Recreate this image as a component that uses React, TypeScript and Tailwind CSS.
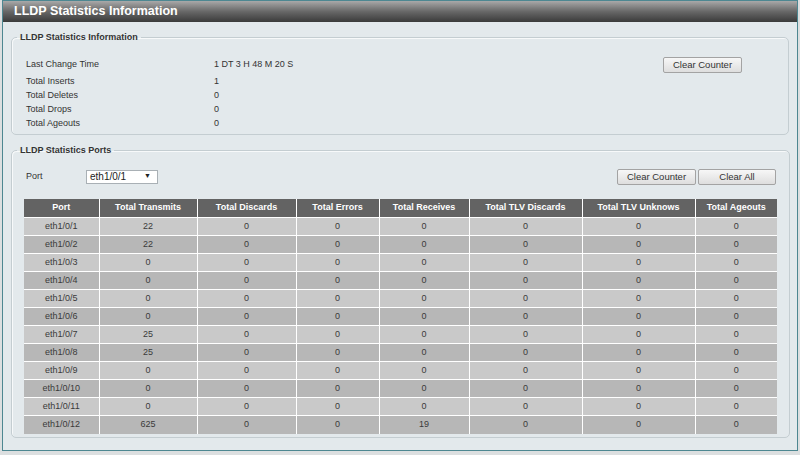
import React from "react"

const rows: [string, number, number, number, number, number, number, number][] = [
  ["eth1/0/1", 22, 0, 0, 0, 0, 0, 0],
  ["eth1/0/2", 22, 0, 0, 0, 0, 0, 0],
  ["eth1/0/3", 0, 0, 0, 0, 0, 0, 0],
  ["eth1/0/4", 0, 0, 0, 0, 0, 0, 0],
  ["eth1/0/5", 0, 0, 0, 0, 0, 0, 0],
  ["eth1/0/6", 0, 0, 0, 0, 0, 0, 0],
  ["eth1/0/7", 25, 0, 0, 0, 0, 0, 0],
  ["eth1/0/8", 25, 0, 0, 0, 0, 0, 0],
  ["eth1/0/9", 0, 0, 0, 0, 0, 0, 0],
  ["eth1/0/10", 0, 0, 0, 0, 0, 0, 0],
  ["eth1/0/11", 0, 0, 0, 0, 0, 0, 0],
  ["eth1/0/12", 625, 0, 0, 19, 0, 0, 0],
]

const headers = [
  { label: "Port", w: "w-[75px]" },
  { label: "Total Transmits", w: "w-[98px]" },
  { label: "Total Discards", w: "w-[99px]" },
  { label: "Total Errors", w: "w-[83px]" },
  { label: "Total Receives", w: "w-[90px]" },
  { label: "Total TLV Discards", w: "w-[113px]" },
  { label: "Total TLV Unknows", w: "w-[113px]" },
  { label: "Total Ageouts", w: "w-[82px]" },
]

const info = [
  ["Total Inserts", "1"],
  ["Total Deletes", "0"],
  ["Total Drops", "0"],
  ["Total Ageouts", "0"],
]

function Btn({ children, w }: { children: React.ReactNode; w: string }) {
  return (
    <button
      className={`${w} h-[16px] rounded-[2px] border border-[#a3a3a3] bg-gradient-to-b from-[#f7f7f7] to-[#dedede] text-[9.5px] leading-none text-[#333]`}
    >
      {children}
    </button>
  )
}

function Fieldset({ legend, className, children }: { legend: string; className: string; children: React.ReactNode }) {
  return (
    <fieldset
      className={`mx-[8px] rounded-[5px] border border-[#c4cdd1] shadow-[1px_1px_0_#f7f9fa_inset] ${className}`}
    >
      <legend className="ml-[5px] px-[3px] text-[9px] font-bold text-[#333]">{legend}</legend>
      {children}
    </fieldset>
  )
}

export default function App() {
  return (
    <div className="h-[455px] w-[800px] bg-[#dcdfe0] font-['Liberation_Sans',Arial,sans-serif]">
      <div className="ml-[2px] h-[451px] w-[796px] border border-[#4d8791] bg-[#e3e9ec]">
        {/* Title bar */}
        <div className="flex h-[21px] items-center bg-gradient-to-b from-[#a9a9a9] via-[#686868] to-[#3b3b3b] pl-[11px] text-[12.5px] font-bold text-white">
          LLDP Statistics Information
        </div>

        {/* Info section */}
        <Fieldset legend="LLDP Statistics Information" className="mt-[9px] h-[104px]">
          <div className="flex pl-[14px] pr-[46px] pt-[11px] text-[9px] text-[#333]">
            <div className="flex-1">
              <div className="flex h-[19px] items-center">
                <span className="w-[188px]">Last Change Time</span>
                <span>1 DT 3 H 48 M 20 S</span>
              </div>
              {info.map(([k, v]) => (
                <div key={k} className="flex h-[14px] items-center">
                  <span className="w-[188px]">{k}</span>
                  <span>{v}</span>
                </div>
              ))}
            </div>
            <div className="pt-[1px]">
              <Btn w="w-[79px]">Clear Counter</Btn>
            </div>
          </div>
        </Fieldset>

        {/* Ports section */}
        <Fieldset legend="LLDP Statistics Ports" className="mt-[9px] h-[294px]">
          <div className="px-[12px] pt-[11px]">
            <div className="flex items-center text-[9px] text-[#333]">
              <span className="w-[62px] pl-[2px]">Port</span>
              <div className="flex h-[14px] w-[72px] items-center justify-between border border-[#a9b0b5] bg-white pl-[3px] pr-[6px] text-[10px] text-[#222]">
                <span>eth1/0/1</span>
                <span className="text-[7px]">▼</span>
              </div>
              <div className="ml-auto mr-[1px] flex gap-[2px]">
                <Btn w="w-[79px]">Clear Counter</Btn>
                <Btn w="w-[78px]">Clear All</Btn>
              </div>
            </div>

            <table className="mt-[14px] w-[753px] table-fixed border-collapse text-center text-[9px]">
              <thead>
                <tr className="h-[19px] bg-[#636363] text-white">
                  {headers.map((h) => (
                    <th key={h.label} className={`${h.w} border-l border-white p-0 font-bold first:border-l-0`}>
                      {h.label}
                    </th>
                  ))}
                </tr>
              </thead>
              <tbody className="text-[#3a3a3a]">
                {rows.map((r, i) => (
                  <tr key={r[0]} className={`h-[18px] border-t border-white ${i % 2 === 0 ? "bg-[#c9c9c9]" : "bg-[#b7b7b7]"}`}>
                    {r.map((c, j) => (
                      <td key={j} className="border-l border-white p-0 first:border-l-0">
                        {c}
                      </td>
                    ))}
                  </tr>
                ))}
              </tbody>
            </table>
          </div>
        </Fieldset>
      </div>
    </div>
  )
}
